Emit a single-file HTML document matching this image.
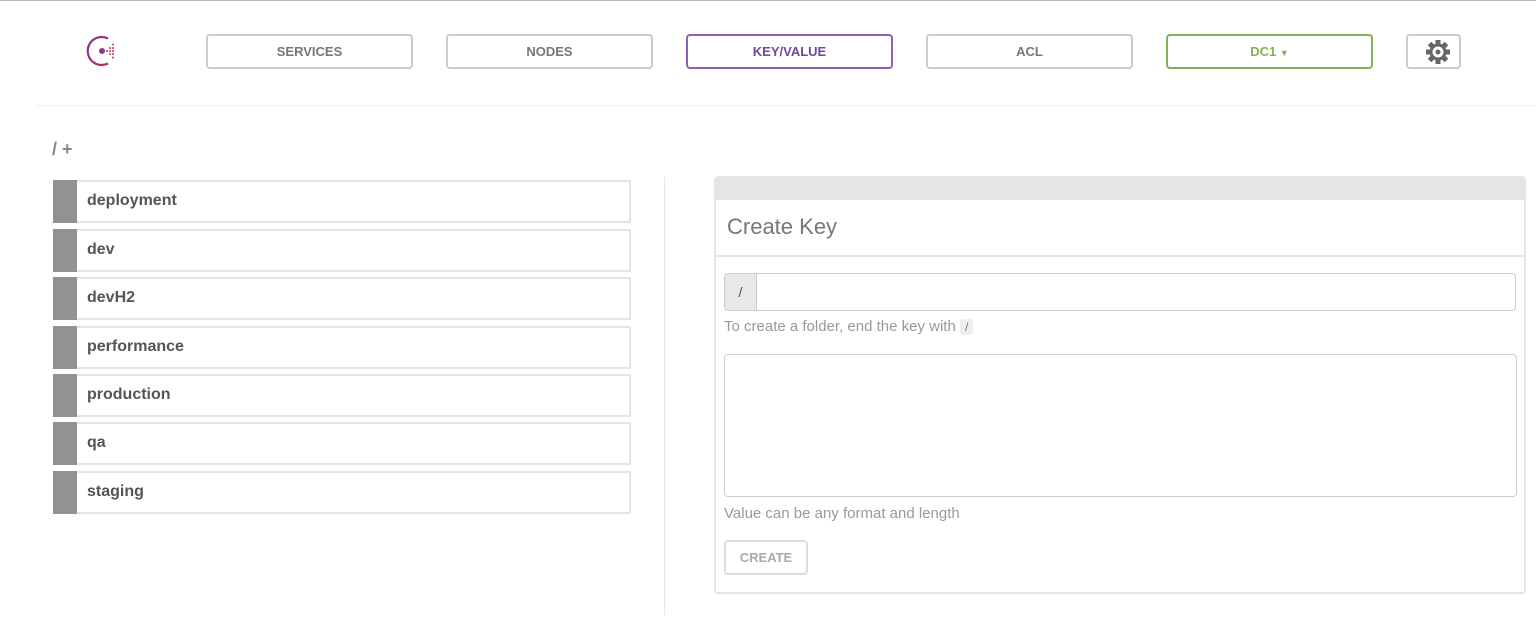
<!DOCTYPE html>
<html><head><style>
*{box-sizing:border-box;margin:0;padding:0}
body{width:1536px;height:640px;background:#fff;font-family:"Liberation Sans",sans-serif;position:relative;overflow:hidden}
.a{position:absolute}
.nb{position:absolute;top:34px;height:35px;width:207px;border:2px solid #ccc;border-radius:4px;font-size:13px;font-weight:bold;color:#777;text-align:center;line-height:31px}
.it{position:absolute;left:53px;width:578px;height:43px;border:2px solid #e5e5e5;border-left:none}
.it::before{content:"";position:absolute;left:0;top:-2px;bottom:-2px;width:24px;background:#929292}
.it span{position:absolute;left:34px;top:10px;font-size:16px;font-weight:bold;color:#555}
</style></head><body>
<div class="a" style="left:0;top:0;width:1536px;height:1px;background:#bbb"></div>
<svg class="a" style="left:84px;top:33px" width="40" height="36" viewBox="0 0 40 36">
<defs><linearGradient id="g" x1="0" x2="1" y1="0" y2="1"><stop offset="0" stop-color="#7a3f96"/><stop offset="1" stop-color="#c0255e"/></linearGradient></defs>
<path d="M24 5.5 A14 14 0 1 0 24 30.5" fill="none" stroke="url(#g)" stroke-width="2.2"/>
<circle cx="18" cy="18" r="3" fill="#8a3d7f"/>
<g fill="#d0324f"><circle cx="23" cy="18" r="1"/><circle cx="26" cy="15" r="1"/><circle cx="26" cy="18" r="1"/><circle cx="26" cy="21" r="1"/><circle cx="29" cy="11.5" r="1"/><circle cx="29" cy="15" r="1"/><circle cx="29" cy="18" r="1"/><circle cx="29" cy="21" r="1"/><circle cx="29" cy="24.5" r="1"/></g>
</svg>
<div class="nb" style="left:206px">SERVICES</div>
<div class="nb" style="left:446px">NODES</div>
<div class="nb" style="left:686px;border-color:#8a63b8;color:#6b4a9c">KEY/VALUE</div>
<div class="nb" style="left:926px">ACL</div>
<div class="nb" style="left:1166px;border-color:#80b156;color:#80b156">DC1 <span style="font-size:9px">▼</span></div>
<div class="nb" style="left:1406px;width:55px"></div>
<svg class="a" style="left:1425px;top:39px" width="26" height="26" viewBox="0 0 26 26">
<g fill="#666" transform="translate(13 13)">
<rect x="-2.5" y="-12" width="5" height="6"/><rect x="-2.5" y="-12" width="5" height="6" transform="rotate(45)"/><rect x="-2.5" y="-12" width="5" height="6" transform="rotate(90)"/><rect x="-2.5" y="-12" width="5" height="6" transform="rotate(135)"/><rect x="-2.5" y="-12" width="5" height="6" transform="rotate(180)"/><rect x="-2.5" y="-12" width="5" height="6" transform="rotate(225)"/><rect x="-2.5" y="-12" width="5" height="6" transform="rotate(270)"/><rect x="-2.5" y="-12" width="5" height="6" transform="rotate(315)"/>
<circle r="8.5"/></g>
<circle cx="13" cy="13" r="5.5" fill="#fff"/><circle cx="13" cy="13" r="2.5" fill="#666"/>
</svg>
<div class="a" style="left:36px;top:105px;width:1500px;height:1px;background:#eee"></div>
<div class="a" style="left:52px;top:139px;font-size:18px;font-weight:bold;color:#888">/ +</div>
<div class="it" style="top:180px"><span>deployment</span></div>
<div class="it" style="top:229px"><span>dev</span></div>
<div class="it" style="top:277px"><span>devH2</span></div>
<div class="it" style="top:326px"><span>performance</span></div>
<div class="it" style="top:374px"><span>production</span></div>
<div class="it" style="top:422px"><span>qa</span></div>
<div class="it" style="top:471px"><span>staging</span></div>
<div class="a" style="left:664px;top:177px;width:1px;height:438px;background:#e5e5e5"></div>
<div class="a" style="left:714px;top:176px;width:812px;height:418px;border:2px solid #e5e5e5;border-top:none;border-radius:4px;overflow:hidden">
<div style="height:24px;background:#e5e5e5"></div>
<div style="position:absolute;left:11px;top:38px;font-size:22px;color:#777">Create Key</div>
<div style="position:absolute;left:0;right:0;top:79px;height:2px;background:#e5e5e5"></div>
<div style="position:absolute;left:8px;top:97px;width:792px;height:38px;border:1px solid #ccc;border-radius:4px;overflow:hidden"><div style="width:32px;height:100%;background:#e8e8e8;border-right:1px solid #ccc;text-align:center;line-height:36px;font-size:14px;color:#555">/</div></div>
<div style="position:absolute;left:8px;top:142px;font-size:15px;color:#999">To create a folder, end the key with <span style="background:#eee;border-radius:3px;padding:1px 5px;font-size:12px;color:#8a63b8">/</span></div>
<div style="position:absolute;left:8px;top:178px;width:793px;height:143px;border:1px solid #ccc;border-radius:4px"></div>
<div style="position:absolute;left:8px;top:329px;font-size:15px;color:#999">Value can be any format and length</div>
<div style="position:absolute;left:8px;top:364px;width:84px;height:35px;border:2px solid #ddd;border-radius:4px;text-align:center;line-height:31px;font-size:13px;font-weight:bold;color:#aaa">CREATE</div>
</div>
</body></html>
